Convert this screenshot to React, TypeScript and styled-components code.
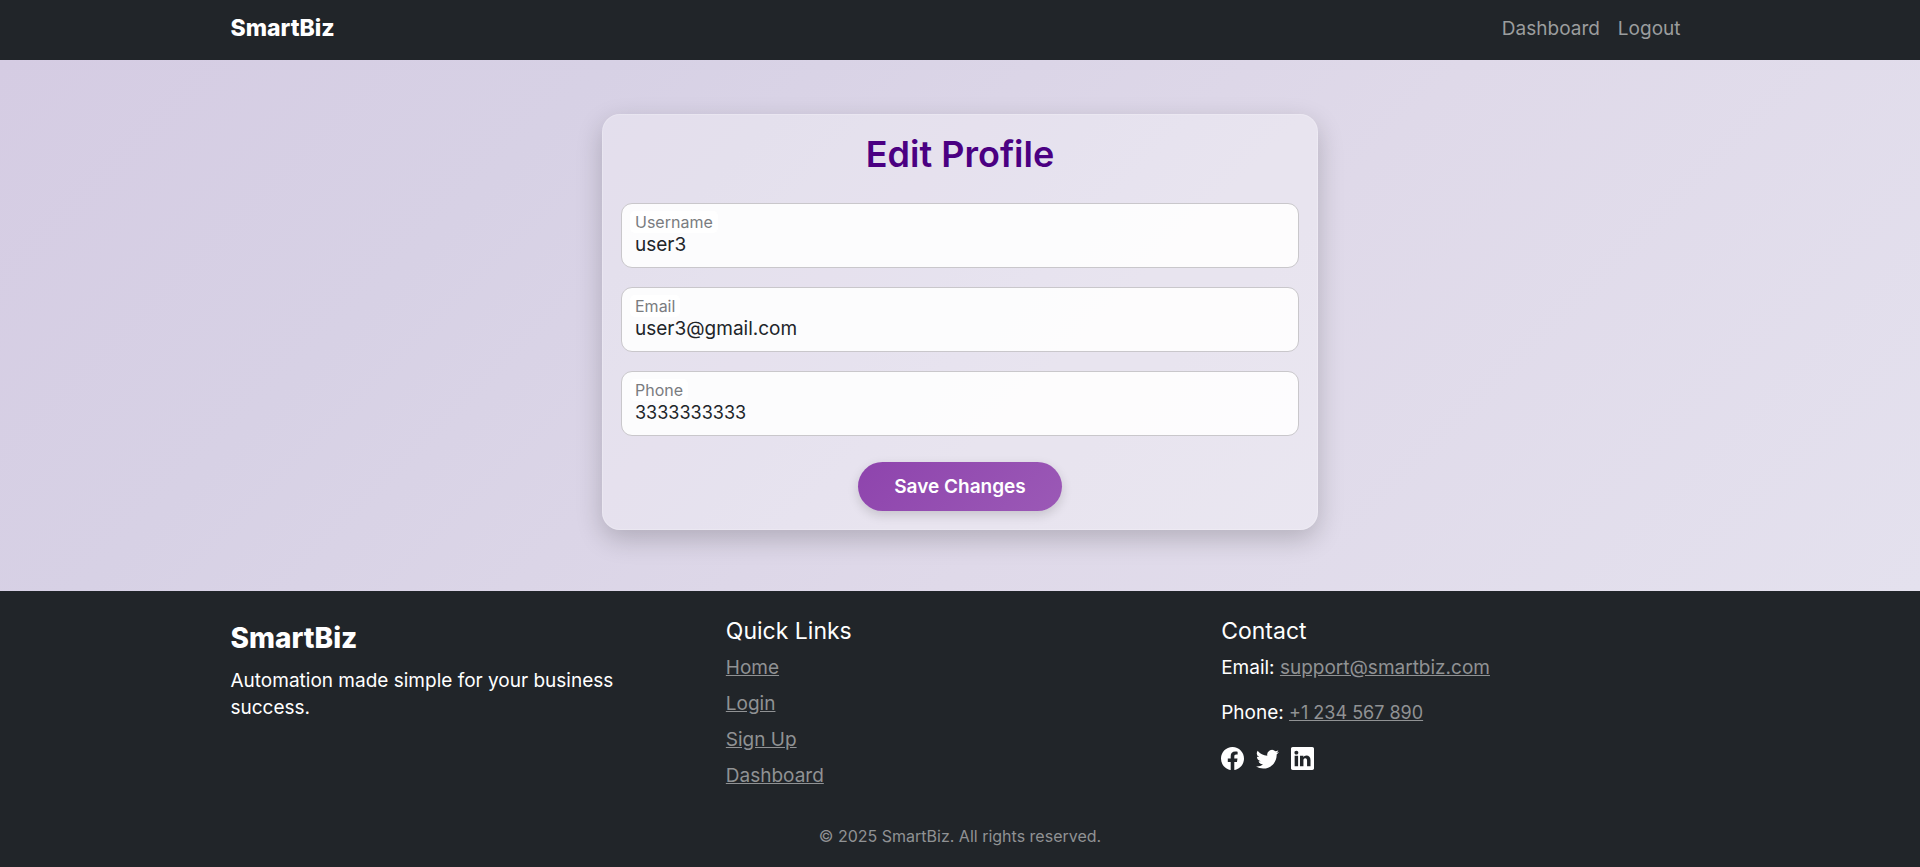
import React from "react";
import styled, { createGlobalStyle } from "styled-components";
import { BsFacebook, BsLinkedin, BsTwitter } from "react-icons/bs";

const GlobalStyle = createGlobalStyle`
  *, *::before, *::after { box-sizing: border-box; }
  body {
    margin: 0;
    font-family: Inter, "Open Sans", sans-serif;
    font-size: 19px;
    line-height: 27px;
    color: #212529;
    background: #212529;
  }
  h1, h2, h3, p, ul { margin: 0; padding: 0; font-weight: 400; }
  ul { list-style: none; }
`;

const Page = styled.div`
  min-height: 100vh;
  display: flex;
  flex-direction: column;
`;

const Container = styled.div`
  width: 100%;
  max-width: 1485px;
  margin: 0 auto;
  padding: 0 13px;
`;

const NavBar = styled.header`
  background: #212529;
`;

const NavInner = styled(Container)`
  min-height: 60px;
  display: flex;
  align-items: center;
  justify-content: space-between;
  padding-bottom: 4px;
`;

const Brand = styled.a`
  color: #fff;
  font-size: 23px;
  font-weight: 800;
  text-decoration: none;
`;

const NavLinks = styled.nav`
  display: flex;
  gap: 18px;
  padding-right: 9px;
`;

const NavLink = styled.a`
  color: #9b9d9e;
  text-decoration: none;
`;

const Main = styled.main`
  flex: 1;
  display: flex;
  justify-content: center;
  align-items: flex-start;
  padding: 54px 14px 61px;
  background: linear-gradient(135deg, #d5cce3 0%, #d7d1e5 25%, #dfd9e9 60%, #e4e1ee 100%);
`;

const Card = styled.form`
  width: 100%;
  max-width: 716px;
  padding: 18px;
  display: flex;
  flex-direction: column;
  align-items: center;
  border: 1px solid rgba(255, 255, 255, 0.2);
  border-radius: 18px;
  background: rgba(255, 255, 255, 0.3);
  box-shadow: 0 9px 27px rgba(0, 0, 0, 0.2);
`;

const Title = styled.h1`
  font-size: 36px;
  line-height: 43px;
  font-weight: 600;
  color: #4b0082;
  margin-bottom: 27px;
`;

const Fields = styled.div`
  width: 100%;
  display: flex;
  flex-direction: column;
  gap: 19px;
`;

const Field = styled.div`
  height: 65px;
  padding: 7px 8px 0;
  display: flex;
  flex-direction: column;
  align-items: flex-start;
  border: 1px solid #c9c7cb;
  border-radius: 11px;
  background: rgba(255, 255, 255, 0.88);
`;

const FieldLabel = styled.label`
  padding: 0 5px;
  border-radius: 5px;
  background: #fff;
  font-size: 16px;
  line-height: 22px;
  color: #7a7c7f;
`;

const FieldInput = styled.input<{ $numeric: boolean }>`
  width: 100%;
  height: 24px;
  padding: 0 5px;
  border: 0;
  outline: 0;
  background: transparent;
  font: inherit;
  line-height: 24px;
  font-size: ${(p) => (p.$numeric ? 18 : 19)}px;
  color: #212529;
`;

const SaveButton = styled.button`
  margin-top: 26px;
  height: 49px;
  padding: 0 36px;
  border: 0;
  border-radius: 25px;
  background: linear-gradient(135deg, #8e44ad, #9b59b6);
  box-shadow: 0 4px 11px rgba(0, 0, 0, 0.15);
  color: #fff;
  font: inherit;
  font-weight: 600;
`;

const Footer = styled.footer`
  background: #212529;
  color: #fff;
  padding: 27px 0 19px;
`;

const FooterColumns = styled(Container)`
  display: grid;
  grid-template-columns: repeat(3, 1fr);
  gap: 27px;
`;

const FooterBrand = styled.h2`
  font-size: 28px;
  line-height: 40px;
  font-weight: 800;
  margin-bottom: 9px;
`;

const Tagline = styled.p`
  padding-right: 36px;
`;

const FooterHeading = styled.h3`
  font-size: 23px;
  line-height: 27px;
  margin-bottom: 9px;
`;

const LinkList = styled.ul`
  display: flex;
  flex-direction: column;
  gap: 9px;
`;

const FooterLink = styled.a`
  color: #909294;
  text-decoration: underline;
`;

const PhoneLink = styled(FooterLink)`
  font-size: 18px;
`;

const ContactLine = styled.p`
  margin-bottom: 18px;
`;

const Socials = styled.div`
  display: flex;
  gap: 12px;
  padding-top: 3px;
`;

const SocialLink = styled.a`
  display: flex;
  color: #fff;
  font-size: 23px;
`;

const Copyright = styled.p`
  margin-top: 35px;
  text-align: center;
  font-size: 16px;
  line-height: 24px;
  color: #909294;
`;

const fields = [
  { id: "username", label: "Username", type: "text", value: "user3" },
  { id: "email", label: "Email", type: "email", value: "user3@gmail.com" },
  { id: "phone", label: "Phone", type: "tel", value: "3333333333" },
];

const quickLinks = ["Home", "Login", "Sign Up", "Dashboard"];

const socials = [
  { name: "Facebook", Icon: BsFacebook },
  { name: "Twitter", Icon: BsTwitter },
  { name: "LinkedIn", Icon: BsLinkedin },
];

export default function App() {
  return (
    <Page>
      <GlobalStyle />
      <NavBar>
        <NavInner>
          <Brand href="#">SmartBiz</Brand>
          <NavLinks>
            <NavLink href="#">Dashboard</NavLink>
            <NavLink href="#">Logout</NavLink>
          </NavLinks>
        </NavInner>
      </NavBar>

      <Main>
        <Card onSubmit={(e) => e.preventDefault()}>
          <Title>Edit Profile</Title>
          <Fields>
            {fields.map((f) => (
              <Field key={f.id}>
                <FieldLabel htmlFor={f.id}>{f.label}</FieldLabel>
                <FieldInput
                  id={f.id}
                  type={f.type}
                  defaultValue={f.value}
                  $numeric={f.type === "tel"}
                />
              </Field>
            ))}
          </Fields>
          <SaveButton type="submit">Save Changes</SaveButton>
        </Card>
      </Main>

      <Footer>
        <FooterColumns>
          <div>
            <FooterBrand>SmartBiz</FooterBrand>
            <Tagline>Automation made simple for your business success.</Tagline>
          </div>
          <div>
            <FooterHeading>Quick Links</FooterHeading>
            <LinkList>
              {quickLinks.map((name) => (
                <li key={name}>
                  <FooterLink href="#">{name}</FooterLink>
                </li>
              ))}
            </LinkList>
          </div>
          <div>
            <FooterHeading>Contact</FooterHeading>
            <ContactLine>
              Email: <FooterLink href="mailto:support@smartbiz.com">support@smartbiz.com</FooterLink>
            </ContactLine>
            <ContactLine>
              Phone: <PhoneLink href="tel:+1234567890">+1 234 567 890</PhoneLink>
            </ContactLine>
            <Socials>
              {socials.map(({ name, Icon }) => (
                <SocialLink key={name} href="#" aria-label={name}>
                  <Icon />
                </SocialLink>
              ))}
            </Socials>
          </div>
        </FooterColumns>
        <Copyright>© 2025 SmartBiz. All rights reserved.</Copyright>
      </Footer>
    </Page>
  );
}
